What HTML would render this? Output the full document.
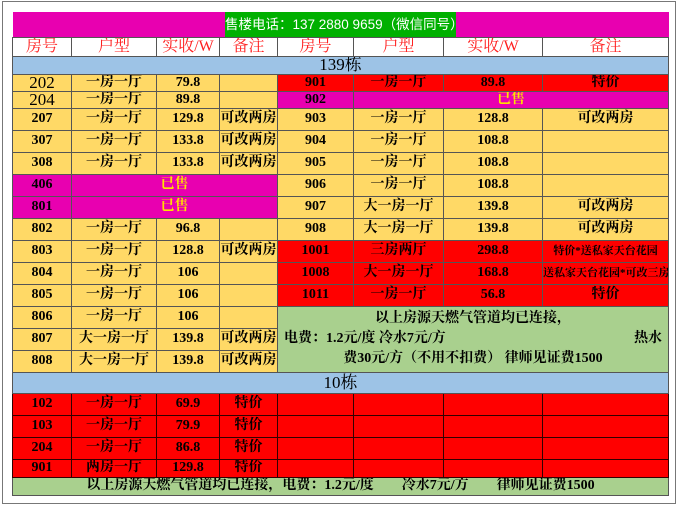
<!DOCTYPE html>
<html><head><meta charset="utf-8"><style>
body{margin:0;width:680px;height:507px;background:#fff;position:relative;overflow:hidden}
.frame{position:absolute;left:2px;top:1px;width:674px;height:503px;border:1px solid #777;box-sizing:border-box}
table{position:absolute;left:12px;top:12px;border-collapse:collapse;table-layout:fixed;width:656px;font-family:"Liberation Serif","Noto Serif CJK SC",serif;font-size:14px;color:#000;font-weight:bold}
td{border:1px solid #555;padding:0;text-align:center;vertical-align:middle;overflow:hidden;white-space:nowrap;line-height:14px}
.y td,td.y{background:#FFD966}
.r{background:#FF0000}
.m{background:#E800B0}
.hd td{background:#fff;color:#FF2020;font-size:16px;font-weight:normal}
.b{background:#9DC3E6;font-weight:normal}
.g{background:#A9D08E}
.sold{color:#FFE000}
.sm{font-size:11px}
.phone{position:absolute;left:225px;top:12px;width:231px;height:25px;background:#00B000;color:#fff;font-family:"Liberation Sans","Noto Sans CJK SC",sans-serif;font-size:13.5px;line-height:25px;white-space:nowrap;overflow:hidden;z-index:2}
.rr td{border-color:#300}
</style></head><body>
<div class="frame"></div>
<table>
<colgroup><col style="width:59px"><col style="width:85px"><col style="width:63px"><col style="width:58px"><col style="width:76px"><col style="width:90px"><col style="width:99px"><col style="width:126px"></colgroup>
<tr style="height:25px"><td colspan="8" class="m" style="border:none"></td></tr>
<tr class="hd" style="height:19px"><td>房号</td><td>户型</td><td>实收/W</td><td>备注</td><td>房号</td><td>户型</td><td>实收/W</td><td>备注</td></tr>
<tr style="height:18px"><td colspan="8" class="b" style="font-size:17px">139栋</td></tr>
<tr style="height:17px"><td class="y" style="font-size:17px;font-weight:normal">202</td><td class="y">一房一厅</td><td class="y">79.8</td><td class="y"></td><td class="r">901</td><td class="r">一房一厅</td><td class="r">89.8</td><td class="r">特价</td></tr>
<tr style="height:17px"><td class="y" style="font-size:17px;font-weight:normal">204</td><td class="y">一房一厅</td><td class="y">89.8</td><td class="y"></td><td class="m">902</td><td colspan="3" class="m sold">已售</td></tr>
<tr class="y" style="height:22px"><td>207</td><td>一房一厅</td><td>129.8</td><td>可改两房</td><td>903</td><td>一房一厅</td><td>128.8</td><td>可改两房</td></tr>
<tr class="y" style="height:22px"><td>307</td><td>一房一厅</td><td>133.8</td><td>可改两房</td><td>904</td><td>一房一厅</td><td>108.8</td><td></td></tr>
<tr class="y" style="height:22px"><td>308</td><td>一房一厅</td><td>133.8</td><td>可改两房</td><td>905</td><td>一房一厅</td><td>108.8</td><td></td></tr>
<tr style="height:22px"><td class="m">406</td><td colspan="3" class="m sold">已售</td><td class="y">906</td><td class="y">一房一厅</td><td class="y">108.8</td><td class="y"></td></tr>
<tr style="height:22px"><td class="m">801</td><td colspan="3" class="m sold">已售</td><td class="y">907</td><td class="y">大一房一厅</td><td class="y">139.8</td><td class="y">可改两房</td></tr>
<tr class="y" style="height:22px"><td>802</td><td>一房一厅</td><td>96.8</td><td></td><td>908</td><td>大一房一厅</td><td>139.8</td><td>可改两房</td></tr>
<tr style="height:22px"><td class="y">803</td><td class="y">一房一厅</td><td class="y">128.8</td><td class="y">可改两房</td><td class="r">1001</td><td class="r">三房两厅</td><td class="r">298.8</td><td class="r sm">特价*送私家天台花园</td></tr>
<tr style="height:22px"><td class="y">804</td><td class="y">一房一厅</td><td class="y">106</td><td class="y"></td><td class="r">1008</td><td class="r">大一房一厅</td><td class="r">168.8</td><td class="r sm">送私家天台花园*可改三房</td></tr>
<tr style="height:22px"><td class="y">805</td><td class="y">一房一厅</td><td class="y">106</td><td class="y"></td><td class="r">1011</td><td class="r">一房一厅</td><td class="r">56.8</td><td class="r">特价</td></tr>
<tr style="height:22px"><td class="y">806</td><td class="y">一房一厅</td><td class="y">106</td><td class="y"></td>
<td colspan="4" rowspan="3" class="g" style="white-space:normal;line-height:20px;text-align:left;padding:0 6px">
<div style="text-align:center">以上房源天燃气管道均已连接，</div>
<div>电费：1.2元/度 冷水7元/方<span style="float:right">热水</span></div>
<div style="text-align:center">费30元/方（不用不扣费） 律师见证费1500</div></td></tr>
<tr class="y" style="height:22px"><td>807</td><td>大一房一厅</td><td>139.8</td><td>可改两房</td></tr>
<tr class="y" style="height:22px"><td>808</td><td>大一房一厅</td><td>139.8</td><td>可改两房</td></tr>
<tr style="height:21px"><td colspan="8" class="b" style="font-size:17px">10栋</td></tr>
<tr class="r rr" style="height:22px"><td>102</td><td>一房一厅</td><td>69.9</td><td>特价</td><td></td><td></td><td></td><td></td></tr>
<tr class="r rr" style="height:22px"><td>103</td><td>一房一厅</td><td>79.9</td><td>特价</td><td></td><td></td><td></td><td></td></tr>
<tr class="r rr" style="height:22px"><td>204</td><td>一房一厅</td><td>86.8</td><td>特价</td><td></td><td></td><td></td><td></td></tr>
<tr class="r rr" style="height:18px"><td>901</td><td>两房一厅</td><td>129.8</td><td>特价</td><td></td><td></td><td></td><td></td></tr>
<tr style="height:18px"><td colspan="8" class="g">以上房源天燃气管道均已连接，电费：1.2元/度　　冷水7元/方　　律师见证费1500</td></tr>
</table>
<div class="phone">售楼电话：137 2880 9659（微信同号）</div>
</body></html>
